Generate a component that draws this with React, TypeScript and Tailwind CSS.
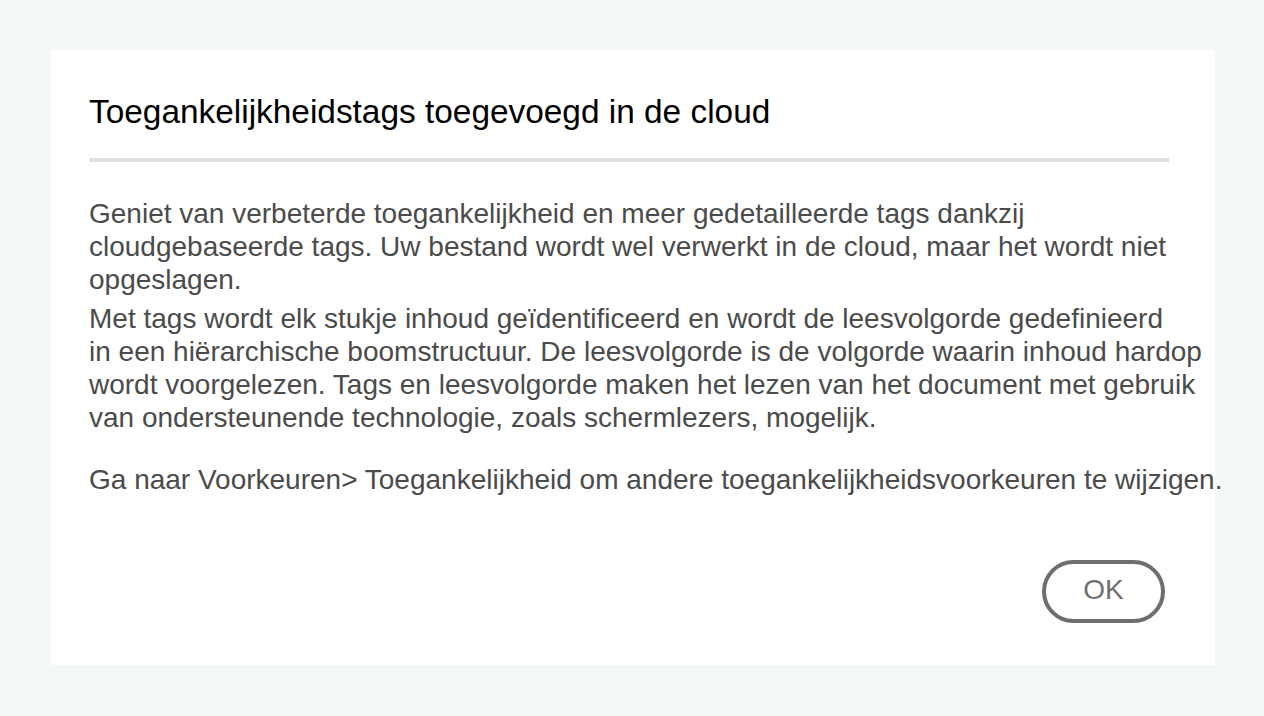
export default function App() {
  return (
    <div className="h-[716px] w-[1264px] bg-[#f5f8f9] pl-[51px] pt-[50px] font-['Liberation_Sans',Arial,sans-serif]">
      <div className="flex h-[615px] w-[1164px] flex-col bg-white pl-[38px] pr-[46px]">
        <h1 className="mt-[42px] text-[33.4px] leading-[40px] text-black">
          Toegankelijkheidstags toegevoegd in de cloud
        </h1>
        <div className="mt-[26px] h-[4px] bg-[#e0e0e0]" />
        <div className="mt-[35px] whitespace-nowrap text-[28px] leading-[33px] text-[#4b4b4b]">
          <p>
            Geniet van verbeterde toegankelijkheid en meer gedetailleerde tags dankzij
            <br />
            cloudgebaseerde tags. Uw bestand wordt wel verwerkt in de cloud, maar het wordt niet
            <br />
            opgeslagen.
          </p>
          <p className="mt-[6px]">
            Met tags wordt elk stukje inhoud geïdentificeerd en wordt de leesvolgorde gedefinieerd
            <br />
            in een hiërarchische boomstructuur. De leesvolgorde is de volgorde waarin inhoud hardop
            <br />
            wordt voorgelezen. Tags en leesvolgorde maken het lezen van het document met gebruik
            <br />
            van ondersteunende technologie, zoals schermlezers, mogelijk.
          </p>
          <p className="mt-[29px]">
            Ga naar Voorkeuren&gt; Toegankelijkheid om andere toegankelijkheidsvoorkeuren te wijzigen.
          </p>
        </div>
        <div className="mt-auto mb-[42px] flex justify-end pr-[4px]">
          <button className="flex h-[63px] w-[123px] items-center justify-center rounded-full border-[4px] border-[#6e6e6e] pb-[4px] text-[28px] text-[#6e6e6e]">
            OK
          </button>
        </div>
      </div>
    </div>
  );
}
